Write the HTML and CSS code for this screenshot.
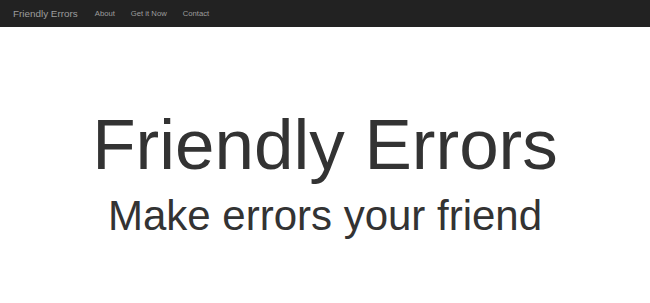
FILE: index.html
```html
<!DOCTYPE html>
<html lang="en">
<head>
    <meta charset="UTF-8">
    <meta name="viewport" content="width=device-width, initial-scale=1.0">
    <title>Friendly Errors</title>
    <link rel="stylesheet" href="styles.css">
</head>
<body>
    <nav class="navbar">
        <a class="brand" href="#">Friendly Errors</a>
        <ul class="nav">
            <li><a href="#about">About</a></li>
            <li><a href="#get">Get it Now</a></li>
            <li><a href="#contact">Contact</a></li>
        </ul>
    </nav>

    <div class="hero">
        <h1>Friendly Errors</h1>
        <p class="lead">Make errors your friend</p>
    </div>
</body>
</html>
```

FILE: styles.css
```css
body {
    margin: 0;
    background-color: #fff;
    font-family: "Liberation Sans", Arial, sans-serif;
    color: #333;
}
.navbar {
    display: flex;
    align-items: center;
    height: 27px;
    background-color: #222;
    padding: 0 13px;
}
.brand {
    color: #9d9d9d;
    font-size: 9.9px;
    text-decoration: none;
    margin-right: 9px;
}
.nav {
    display: flex;
    list-style: none;
    margin: 0;
    padding: 0;
}
.nav a {
    display: block;
    color: #9d9d9d;
    font-size: 7.7px;
    text-decoration: none;
    padding: 0 8px;
}
.hero {
    text-align: center;
    padding-top: 79px;
}
.hero h1 {
    font-size: 71px;
    font-weight: normal;
    line-height: 1.1;
    margin: 0;
}
.lead {
    font-size: 42px;
    line-height: 1.1;
    margin: 9px 0 0;
}
```
